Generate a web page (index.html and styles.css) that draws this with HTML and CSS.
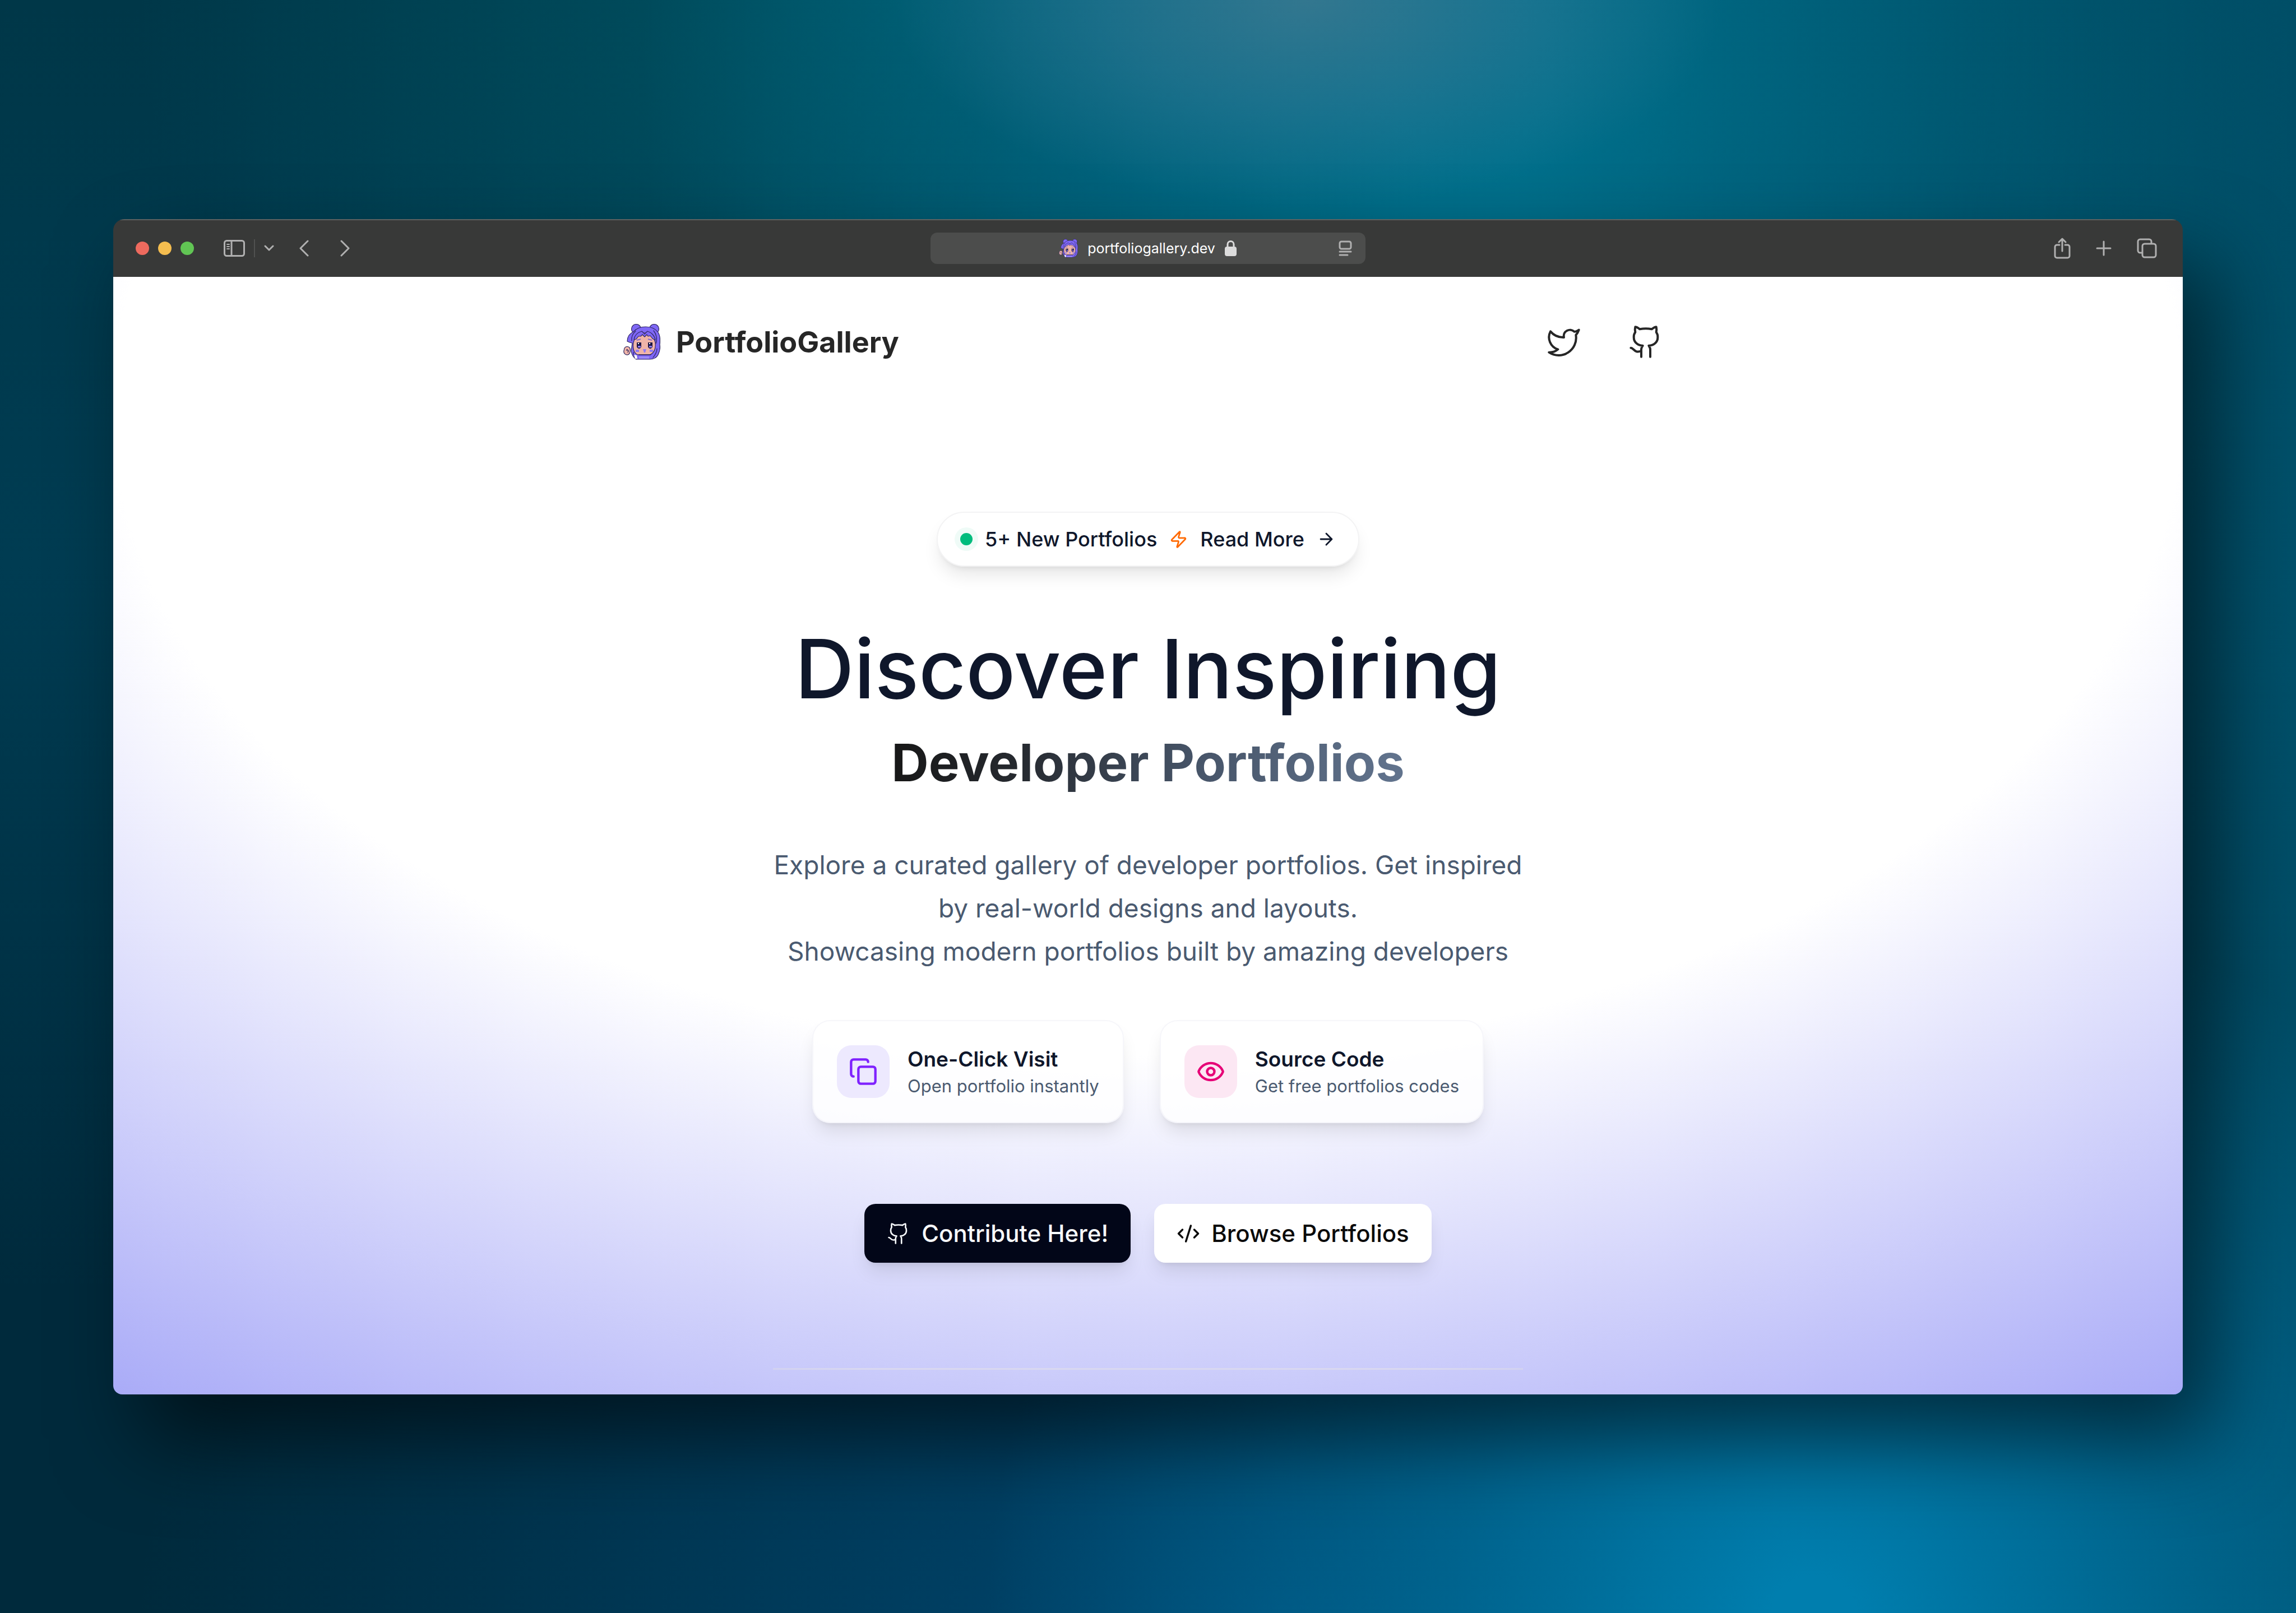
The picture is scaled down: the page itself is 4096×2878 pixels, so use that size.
FILE: index.html
```html
<!DOCTYPE html>
<html lang="en">
<head>
<meta charset="utf-8">
<meta name="viewport" content="width=device-width, initial-scale=1">
<title>PortfolioGallery</title>
<link rel="stylesheet" href="styles.css">
</head>
<body>
<svg class="defs" aria-hidden="true">
  <symbol id="mascot" viewBox="0 0 66 64">
    <g stroke="#2f2760" stroke-width="1.2" stroke-linejoin="round" stroke-linecap="round">
      <circle cx="23" cy="9" r="8.500" fill="#7f68f6"/>
      <circle cx="55" cy="9" r="8.500" fill="#7f68f6"/>
      <path fill="#7f68f6" d="M18 14C24 7 32 5 40 5s17 3 22 10c4 6 4 14 3 22 1 5 0 12-3 18-3 6-9 8-15 8-4 0-20 0-24 0-5-3-8-8-9-15l2-14c-3 0-5-1-9-3 0-8 4-14 11-17z"/>
      <path fill="#efb4a8" d="M18 33l4-12 10-5 6 0 6 0 9 5 4 12c1 8 0 13-4 18-2 2-4 4-6 4H27c-3 0-5-2-7-5-3-5-3-11-2-17z"/>
      <path fill="none" d="M22 13c-5 4-8 10-7 17M54 12c5 6 7 15 4 23M18 50c0 5 1 9 5 12M60 44c0 6-3 11-7 16"/>
      <path fill="#7f68f6" d="M19 28c1-8 7-13 14-15l5 5 5-5c7 2 13 8 14 16l-5-3-4-5-4 1-2-3-4 4-4-4-3 3-4 0-4 5z"/>
      <path fill="#efb4a8" d="M2 43c3-4 9-3 10 1s0 10-4 11-8-3-7-7z"/>
    </g>
    <path fill="none" stroke="#6c57d9" stroke-width="1.5" d="M24 29l7-2M44 27l7 2"/>
    <path fill="#1d1745" d="M24 33h8v8c-2 4-6 4-8 0zM44 33h8v8c-2 4-6 4-8 0z"/>
    <path fill="#8f7af5" d="M26 39h5v3h-5zM46 39h5v3h-5zM22 46h6v4h-6zM47 46h6v4h-6zM35 45h6l-2 6h-2z"/>
    <path fill="none" stroke="#fff" stroke-width="2" d="M26 35h2M46 35h2"/>
    <path fill="#fff" d="M19 55l5 1 1 6-4 0z"/>
    <path fill="none" stroke="#2f2760" stroke-width="1.500" d="M27 55h22M5 47l2-1 2 2-1 3"/>
    <path fill="#9b8af8" d="M28 58h18v4H28z"/>
  </symbol>
  <symbol id="github" viewBox="0 0 24 24">
    <path d="M15 22v-4a4.800 4.800 0 0 0-1-3.500c3 0 6-2 6-5.500.08-1.250-.27-2.480-1-3.500.28-1.150.28-2.350 0-3.500 0 0-1 0-3 1.500-2.640-.5-5.360-.5-8 0C6 2 5 2 5 2c-.3 1.150-.3 2.350 0 3.500A5.403 5.403 0 0 0 4 9c0 3.500 3 5.500 6 5.500-.39.490-.68 1.050-.85 1.650-.17.600-.22 1.230-.15 1.850v4"/>
    <path d="M9 18c-4.510 2-5-2-7-2"/>
  </symbol>
</svg>

<main class="window">
  <div class="toolbar">
    <div class="toolbar-side">
      <div class="lights">
        <button class="light light-close" aria-label="Close"></button>
        <button class="light light-min" aria-label="Minimise"></button>
        <button class="light light-max" aria-label="Zoom"></button>
      </div>
      <div class="sidebar-tools">
        <button class="tool" aria-label="Sidebar"><svg width="38" height="32" viewBox="0 0 38 32"><rect x="1.500" y="2.500" width="35" height="27" rx="4"/><path d="M14 3v26"/><path stroke-width="2" d="M6 9h4M6 13h4M6 17h4"/></svg></button>
        <span class="tool-rule"></span>
        <button class="tool" aria-label="Tab groups"><svg width="18" height="12" viewBox="0 0 18 12"><path d="M2 2l7 7 7-7"/></svg></button>
      </div>
      <div class="history">
        <button class="tool" aria-label="Back"><svg width="18" height="30" viewBox="0 0 18 30"><path d="M16 2L3 15l13 13"/></svg></button>
        <button class="tool" aria-label="Forward"><svg width="18" height="30" viewBox="0 0 18 30"><path d="M2 2l13 13L2 28"/></svg></button>
      </div>
    </div>
    <div class="address">
      <span></span>
      <div class="address-main">
        <svg class="favicon" width="34" height="34"><use href="#mascot"/></svg>
        <input class="address-input" type="text" value="portfoliogallery.dev" aria-label="Address">
        <svg width="22" height="30" viewBox="0 0 22 30"><rect x="0" y="12" width="21" height="17" rx="4" fill="#dcdcdc"/><path d="M5 13V8a5.500 5.500 0 0 1 11 0v5" fill="none" stroke="#dcdcdc" stroke-width="3"/></svg>
      </div>
      <button class="tool reader" aria-label="Reader"><svg width="24" height="28" viewBox="0 0 24 28"><rect x="2" y="2" width="20" height="13" rx="3"/><path d="M2 20h20M2 26h14"/></svg></button>
    </div>
    <div class="toolbar-side toolbar-end">
      <button class="tool" aria-label="Share"><svg width="30" height="38" viewBox="0 0 30 38"><path d="M10 13H5.500A3.500 3.500 0 0 0 2 16.500v16A3.500 3.500 0 0 0 5.500 36h19a3.500 3.500 0 0 0 3.500-3.500v-16a3.500 3.500 0 0 0-3.500-3.500H20M15 24V3M9 8l6-6 6 6"/></svg></button>
      <button class="tool" aria-label="New tab"><svg width="28" height="28" viewBox="0 0 28 28"><path d="M14 2v24M2 14h24"/></svg></button>
      <button class="tool" aria-label="Tabs"><svg width="36" height="36" viewBox="0 0 36 36"><rect x="10" y="10" width="24" height="24" rx="4"/><path d="M26 9V6a4 4 0 0 0-4-4H6a4 4 0 0 0-4 4v16a4 4 0 0 0 4 4h3"/></svg></button>
    </div>
  </div>

  <div class="page">
    <header class="header">
      <a class="brand" href="#">
        <svg width="66" height="64" aria-hidden="true"><use href="#mascot"/></svg>
        <span>PortfolioGallery</span>
      </a>
      <nav class="socials">
        <a href="#" aria-label="Twitter"><svg class="line" width="64" height="64" viewBox="0 0 24 24"><path d="M22 4s-.7 2.100-2 3.400c1.600 10-9.400 17.300-18 11.600 2.200.1 4.400-.6 6-2C3 15.500.5 9.600 3 5c2.200 2.600 5.600 4.100 9 4-.9-4.200 4-6.600 7-3.800 1.100 0 3-1.200 3-1.200z"/></svg></a>
        <a href="#" aria-label="GitHub"><svg class="line" width="64" height="64"><use href="#github"/></svg></a>
      </nav>
    </header>

    <section class="hero">
      <a class="pill" href="#">
        <span class="dot"></span>
        <span>5+ New Portfolios</span>
        <svg class="line bolt" width="33" height="33" viewBox="0 0 24 24"><path d="M4 14a1 1 0 0 1-.78-1.630l9.900-10.200a.5.5 0 0 1 .86.460l-1.920 6.020A1 1 0 0 0 13 10h7a1 1 0 0 1 .78 1.630l-9.900 10.200a.5.5 0 0 1-.86-.46l1.920-6.020A1 1 0 0 0 11 14z"/></svg>
        <span>Read More</span>
        <svg class="line arrow" width="34" height="34" viewBox="0 0 24 24"><path d="M5 12h14M12 5l7 7-7 7"/></svg>
      </a>
      <h1 class="title">Discover Inspiring</h1>
      <h2 class="subtitle">Developer Portfolios</h2>
      <p class="lead">Explore a curated gallery of developer portfolios. Get inspired<br>by real-world designs and layouts.<br>Showcasing modern portfolios built by amazing developers</p>

      <div class="cards">
        <article class="card">
          <span class="card-icon violet"><svg class="line" width="52" height="52" viewBox="0 0 24 24"><rect x="8" y="8" width="14" height="14" rx="2"/><path d="M4 16c-1.100 0-2-.9-2-2V4c0-1.100.9-2 2-2h10c1.100 0 2 .9 2 2"/></svg></span>
          <div>
            <h3 class="card-title">One-Click Visit</h3>
            <p class="card-text">Open portfolio instantly</p>
          </div>
        </article>
        <article class="card">
          <span class="card-icon pink"><svg class="line" width="52" height="52" viewBox="0 0 24 24"><path d="M2.062 12.348a1 1 0 0 1 0-.696 10.750 10.750 0 0 1 19.876 0 1 1 0 0 1 0 .696 10.750 10.750 0 0 1-19.876 0"/><circle cx="12" cy="12" r="3"/></svg></span>
          <div>
            <h3 class="card-title">Source Code</h3>
            <p class="card-text">Get free portfolios codes</p>
          </div>
        </article>
      </div>

      <div class="actions">
        <button class="btn btn-dark"><svg class="line" width="42" height="42"><use href="#github"/></svg>Contribute Here!</button>
        <button class="btn btn-light"><svg class="line" width="42" height="42" viewBox="0 0 24 24"><path d="m18 16 4-4-4-4M6 8l-4 4 4 4M14.500 4l-5 16"/></svg>Browse Portfolios</button>
      </div>
      <hr class="divider">
    </section>
  </div>
</main>
</body>
</html>
```
FILE: styles.css
```css
* {
  box-sizing: border-box;
  margin: 0;
}

body {
  min-height: 100vh;
  display: flex;
  padding: 391px 202px 390px;
  font-family: Inter, "Liberation Sans", sans-serif;
  color: #0f172b;
  background:
    radial-gradient(ellipse 18% 13% at 57% 0%, rgba(56, 120, 144, 0.9), rgba(44, 118, 146, 0.6) 50%, transparent),
    radial-gradient(ellipse 36% 60% at 64% 4%, #00708c 10%, rgba(0, 104, 132, 0.7) 50%, transparent),
    radial-gradient(ellipse 34% 40% at 40% 0%, rgba(0, 104, 120, 0.6), transparent),
    radial-gradient(ellipse 36% 46% at 79% 100%, #007eae 5%, rgba(0, 112, 156, 0.7) 45%, transparent),
    radial-gradient(ellipse 50% 40% at 56% 100%, rgba(0, 78, 126, 0.8), transparent),
    linear-gradient(90deg, transparent 70%, rgba(0, 88, 116, 0.7)),
    linear-gradient(#003748, #003c52 35%, #002a3c 80%);
}

a {
  color: inherit;
  text-decoration: none;
}

button {
  border: 0;
  padding: 0;
  background: none;
  font: inherit;
  color: inherit;
}

svg {
  display: block;
  flex: none;
}

.defs {
  position: absolute;
  width: 0;
  height: 0;
}

.line {
  fill: none;
  stroke: currentColor;
  stroke-width: 2;
  stroke-linecap: round;
  stroke-linejoin: round;
}

/* Browser window */

.window {
  flex: 1;
  display: flex;
  flex-direction: column;
  border-radius: 20px 20px 16px 16px;
  overflow: hidden;
  box-shadow: 50px 80px 150px rgba(0, 0, 0, 0.55);
}

.toolbar {
  display: grid;
  grid-template-columns: 1fr 776px 1fr;
  align-items: center;
  height: 103px;
  padding: 0 40px;
  background: #383938;
  box-shadow: inset 0 2px #5f6160;
}

.toolbar-side {
  display: flex;
  align-items: center;
}

.toolbar-end {
  justify-content: flex-end;
  gap: 45px;
  padding-right: 6px;
}

.lights {
  display: flex;
  gap: 16px;
}

.light {
  width: 24px;
  height: 24px;
  border-radius: 50%;
}

.light-close { background: #ed6a5e; }
.light-min { background: #f4bd4f; }
.light-max { background: #61c554; }

.tool {
  color: #b0b0b0;
}

.tool svg {
  fill: none;
  stroke: currentColor;
  stroke-width: 3;
  stroke-linecap: round;
  stroke-linejoin: round;
}

.sidebar-tools {
  display: flex;
  align-items: center;
  gap: 16px;
  margin-left: 53px;
}

.tool-rule {
  width: 2px;
  height: 32px;
  background: #505150;
}

.history {
  display: flex;
  gap: 56px;
  margin-left: 44px;
}

.address {
  display: grid;
  grid-template-columns: 1fr auto 1fr;
  align-items: center;
  height: 56px;
  padding: 0 24px;
  border-radius: 12px;
  background: #4c4d4c;
}

.address-main {
  display: flex;
  align-items: center;
  gap: 17px;
}

.address-input {
  field-sizing: content;
  border: 0;
  padding: 0;
  background: none;
  font: 400 25px Inter, "Liberation Sans", sans-serif;
  color: #fff;
}

.reader {
  justify-self: end;
}

/* Page */

.page {
  flex: 1;
  background: radial-gradient(125% 125% at 50% 10%, #fff 40%, #6366f1 100%) top / 100% 116%;
}

.header {
  display: flex;
  align-items: center;
  justify-content: space-between;
  max-width: 1872px;
  height: 232px;
  margin: 0 auto;
  color: #262626;
}

.brand {
  display: flex;
  align-items: center;
  gap: 28px;
  font-size: 52px;
  font-weight: 700;
}

.socials {
  display: flex;
  gap: 50px;
}

.socials a {
  padding: 16px;
}

.socials .line {
  stroke-width: 1.5;
}

.hero {
  display: flex;
  flex-direction: column;
  align-items: center;
  max-width: 1338px;
  margin: 0 auto;
  padding-top: 187px;
  text-align: center;
}

.pill {
  display: flex;
  align-items: center;
  height: 98px;
  gap: 22px;
  padding: 0 40px;
  border: 2px solid #f3f3f4;
  border-radius: 49px;
  background: #fff;
  font-size: 36px;
  font-weight: 500;
  box-shadow: 0 20px 32px -6px rgba(0, 0, 0, 0.1), 0 8px 12px -8px rgba(0, 0, 0, 0.1);
}

.dot {
  width: 22px;
  height: 22px;
  border-radius: 50%;
  background: #00bc7d;
  box-shadow: 0 0 0 10px #effbf7;
}

.bolt {
  color: #ff6900;
}

.title {
  margin-top: 102px;
  font-size: 146px;
  line-height: 160px;
  font-weight: 500;
  white-space: nowrap;
}

.subtitle {
  margin-top: 32px;
  font-size: 92px;
  line-height: 112px;
  font-weight: 700;
  color: transparent;
  background: linear-gradient(90deg, #171717, #262a30 25%, #475569 60%, #62748e);
  background-clip: text;
}

.lead {
  margin-top: 88px;
  font-size: 46px;
  line-height: 77px;
  color: #4a5a70;
  white-space: nowrap;
}

.cards {
  display: flex;
  gap: 64px;
  margin-top: 84px;
}

.card {
  display: flex;
  align-items: center;
  gap: 32px;
  padding: 42px;
  border: 2px solid rgba(245, 245, 250, 0.9);
  border-radius: 32px;
  background: rgba(255, 255, 255, 0.8) padding-box;
  text-align: left;
  box-shadow: 0 20px 32px -6px rgba(0, 0, 0, 0.1), 0 8px 12px -8px rgba(0, 0, 0, 0.1);
}

.card-icon {
  display: grid;
  place-items: center;
  width: 94px;
  height: 94px;
  border-radius: 26px;
}

.violet {
  color: #7f22fe;
  background: #ede9fe;
}

.pink {
  color: #e60076;
  background: #fce7f3;
}

.card-title {
  font-size: 37px;
  line-height: 52px;
  font-weight: 600;
}

.card-text {
  font-size: 31px;
  line-height: 44px;
  color: #4a5a70;
}

.actions {
  display: flex;
  gap: 42px;
  margin-top: 144px;
}

.btn {
  display: flex;
  align-items: center;
  gap: 20px;
  height: 105px;
  padding: 0 40px;
  border-radius: 20px;
  font-size: 42px;
  font-weight: 500;
  box-shadow: 0 20px 32px -6px rgba(0, 0, 0, 0.1), 0 8px 12px -8px rgba(0, 0, 0, 0.1);
}

.btn-dark {
  background: #020618;
  color: #f8fafc;
}

.btn-dark .line {
  stroke-width: 1.5;
}

.btn-light {
  background: #fff;
  color: #0a0a0a;
}

.divider {
  align-self: stretch;
  height: 3px;
  margin-top: 188px;
  border: 0;
  background: linear-gradient(90deg, #d2d2f0, #d9d8f0 12%, #d9d8f0 88%, #d2d2f0);
}
```
